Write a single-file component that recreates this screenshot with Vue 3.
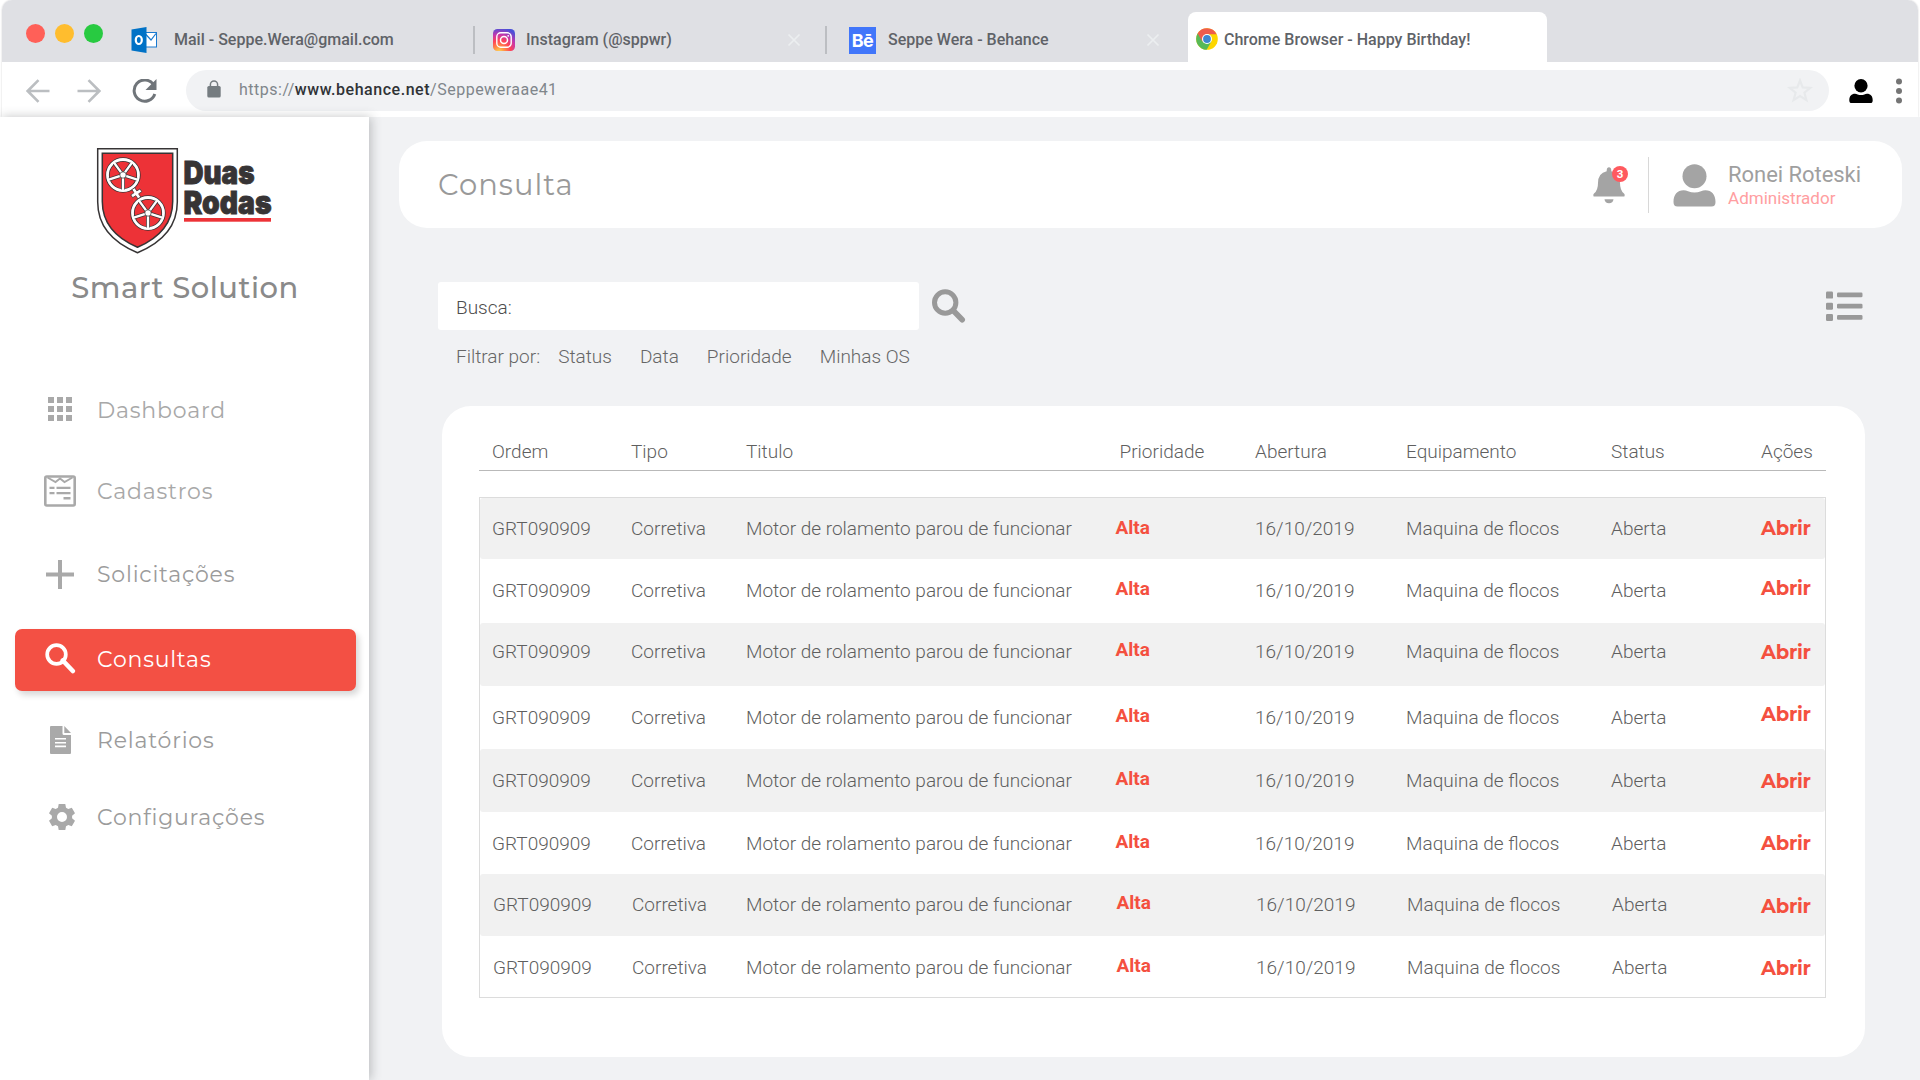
<script setup>
const tabs = [
  { icon: 'outlook', title: 'Mail - Seppe.Wera@gmail.com' },
  { icon: 'instagram', title: 'Instagram (@sppwr)', close: true },
  { icon: 'behance', title: 'Seppe Wera - Behance', close: true },
  { icon: 'chrome', title: 'Chrome Browser - Happy Birthday!', active: true },
]

const menu = [
  { id: 'dashboard', label: 'Dashboard' },
  { id: 'cadastros', label: 'Cadastros' },
  { id: 'solicitacoes', label: 'Solicitações' },
  { id: 'consultas', label: 'Consultas', active: true },
  { id: 'relatorios', label: 'Relatórios' },
  { id: 'configuracoes', label: 'Configurações' },
]

const filters = ['Status', 'Data', 'Prioridade', 'Minhas OS']
const columns = ['Ordem', 'Tipo', 'Titulo', 'Prioridade', 'Abertura', 'Equipamento', 'Status', 'Ações']

// Height of each row and top spacing of its text, priority and action cells
const rows = [
  [61, 20, 19, 19],
  [64, 21, 19, 18],
  [63, 18, 16, 18],
  [63, 21, 19, 17],
  [63, 21, 19, 21],
  [62, 21, 19, 20],
  [62, 20, 18, 21],
  [61, 21, 19, 21],
].map(([height, text, priority, action]) => ({
  ordem: 'GRT090909',
  tipo: 'Corretiva',
  titulo: 'Motor de rolamento parou de funcionar',
  prioridade: 'Alta',
  abertura: '16/10/2019',
  equipamento: 'Maquina de flocos',
  status: 'Aberta',
  style: {
    height: `${height}px`,
    '--text': `${text}px`,
    '--priority': `${priority}px`,
    '--action': `${action}px`,
  },
}))

const spokes = [18, 90, 162, 234, 306]
</script>

<template>
  <div class="window">
    <header class="browser">
      <div class="tabbar">
        <div class="lights"><i class="red"></i><i class="yellow"></i><i class="green"></i></div>
        <div v-for="tab in tabs" :key="tab.icon" class="tab" :class="[tab.icon, { active: tab.active }]">
          <svg v-if="tab.icon === 'outlook'" class="fav" width="26" height="26" viewBox="0 0 26 26">
            <rect x="13" y="5.5" width="12.5" height="14.5" fill="#fff" stroke="#1a7ad0" stroke-width="1" />
            <path d="M14 6.5l6 6.5 5-6.5" fill="none" stroke="#1a7ad0" stroke-width="1.2" />
            <path d="M0.5 2.5L15.5 0v26L0.5 23.5z" fill="#0072c6" />
            <ellipse cx="7.8" cy="13" rx="3" ry="4" fill="none" stroke="#fff" stroke-width="2.2" />
          </svg>
          <svg v-else-if="tab.icon === 'instagram'" class="fav" width="22" height="22" viewBox="0 0 22 22">
            <defs>
              <radialGradient id="ig" cx=".28" cy="1.05" r="1.1">
                <stop offset="0" stop-color="#ffdc55" />
                <stop offset=".2" stop-color="#ff9a45" />
                <stop offset=".48" stop-color="#ff4355" />
                <stop offset=".72" stop-color="#c837ab" />
                <stop offset="1" stop-color="#4a50d8" />
              </radialGradient>
            </defs>
            <rect width="22" height="22" rx="4.5" fill="url(#ig)" />
            <rect x="3.8" y="3.8" width="14.4" height="14.4" rx="4" fill="none" stroke="#fff" stroke-width="1.4" />
            <circle cx="11" cy="11" r="3.5" fill="none" stroke="#fff" stroke-width="1.5" />
            <circle cx="15.2" cy="6.8" r=".9" fill="#fff" />
          </svg>
          <span v-else-if="tab.icon === 'behance'" class="fav be">Bē</span>
          <svg v-else class="fav" width="22" height="22" viewBox="0 0 22 22">
            <circle cx="11" cy="11" r="10.8" fill="#fdd600" />
            <path d="M11 11L1.6 5.6A10.8 10.8 0 0 0 10.6 21.8L15.4 13.4z" fill="#58b957" />
            <path d="M11 11L6.3 13.4 1.6 5.6A10.8 10.8 0 0 1 20.6 6.2H11z" fill="#ef5c4c" />
            <circle cx="11" cy="11" r="5" fill="#fff" />
            <circle cx="11" cy="11" r="3.9" fill="#3f87d0" />
          </svg>
          <span class="title">{{ tab.title }}</span>
          <svg v-if="tab.close" class="close" width="14" height="14" viewBox="0 0 14 14">
            <path d="M1.5 1.5l11 11M12.5 1.5l-11 11" stroke="#eceef0" stroke-width="1.7" />
          </svg>
        </div>
      </div>
      <div class="toolbar">
        <svg class="arrow" width="24" height="24" viewBox="0 0 24 24"><path d="M23.5 12H2.5M12.5 1.2L1.7 12l10.8 10.8" /></svg>
        <svg class="arrow fwd" width="24" height="24" viewBox="0 0 24 24"><path d="M0.5 12h21M11.5 1.2L22.3 12 11.5 22.8" /></svg>
        <svg class="reload" width="25" height="24" viewBox="0 0 25 24">
          <path d="M21.2 5.2A10.6 10.6 0 1 0 22.8 15" fill="none" stroke="#70757a" stroke-width="3" />
          <path d="M24.5 0v11h-11z" fill="#70757a" />
        </svg>
        <div class="address">
          <svg class="lock" width="14" height="18" viewBox="0 0 14 18">
            <rect x="0.3" y="6" width="13.4" height="11.5" rx="1.6" fill="#757c80" />
            <path d="M3.4 7V4.6a3.6 3.6 0 0 1 7.2 0V7" fill="none" stroke="#757c80" stroke-width="1.5" />
          </svg>
          <p class="url">https://<b>www.behance.net</b>/Seppeweraae41</p>
          <svg class="star" width="26" height="25" viewBox="0 0 26 25">
            <path d="M13 2.5l2.7 6.9 7.6.5-5.9 4.8 2 7.4L13 18l-6.4 4.1 2-7.4L2.7 9.9l7.6-.5z" />
          </svg>
        </div>
        <svg class="me" width="24" height="25" viewBox="0 0 24 25">
          <ellipse cx="12" cy="6.8" rx="6.6" ry="6.8" />
          <path d="M0.3 21.5C0.3 17 2.5 14.8 6 14.8q1.5 0 2.6.6 3.4 1.3 6.8 0 1.1-.6 2.6-.6c3.5 0 5.7 2.2 5.7 6.7 0 1.7-.8 2.6-2.4 2.6H2.7C1.1 24.1 .3 23.2.3 21.5z" />
        </svg>
        <svg class="dots" width="6" height="26" viewBox="0 0 6 26">
          <circle cx="3" cy="3.5" r="3" /><circle cx="3" cy="13" r="3" /><circle cx="3" cy="22.5" r="3" />
        </svg>
      </div>
    </header>

    <div class="app">
      <aside class="sidebar">
        <svg class="logo" width="182" height="107" viewBox="0 0 182 107">
          <path d="M.7.7h79.6V54C80.3 80 64 95 40.5 104.7 17 95 .7 80 .7 54z" fill="#fff" stroke="#373435" stroke-width="1.5" />
          <path d="M5.3 5.3h70.4V53.5C75.7 76 62 90 40.5 99.3 19 90 5.3 76 5.3 53.5z" fill="#ed3237" stroke="#373435" stroke-width="1.5" />
          <g v-for="(c, i) in [[26, 27], [51, 65]]" :key="i" :transform="`translate(${c[0]} ${c[1]})`">
            <circle r="15.5" fill="none" stroke="#373435" stroke-width="4.4" />
            <circle r="15.5" fill="none" stroke="#fff" stroke-width="2.8" />
            <g v-for="a in spokes" :key="a" :transform="`rotate(${a})`">
              <rect x="2" y="-1.9" width="12.5" height="3.8" fill="#373435" />
              <rect x="2" y="-1.2" width="13" height="2.4" fill="#fff" />
            </g>
            <circle r="3.2" fill="#fff" stroke="#373435" stroke-width=".7" />
          </g>
          <g transform="translate(39.3 45.3) rotate(57)">
            <path d="M-5.5-1.7h3.8v-3.8h3.4v3.8h3.8v3.4h-3.8v3.8h-3.4v-3.8h-3.8z" fill="#fff" stroke="#373435" stroke-width=".7" />
          </g>
          <text x="86.5" y="36" textLength="71" lengthAdjust="spacingAndGlyphs">Duas</text>
          <text x="86.5" y="66" textLength="88" lengthAdjust="spacingAndGlyphs">Rodas</text>
          <rect x="87" y="70" width="87" height="3.7" fill="#ed3237" />
        </svg>
        <h1 class="product">Smart Solution</h1>
        <nav class="menu">
          <a v-for="item in menu" :key="item.id" class="item" :class="[item.id, { active: item.active }]">
            <span class="ico">
              <svg v-if="item.id === 'dashboard'" width="24" height="24" viewBox="0 0 24 24">
                <path d="M0 0h6v6H0zM9 0h6v6H9zM18 0h6v6h-6zM0 9h6v6H0zM9 9h6v6H9zM18 9h6v6h-6zM0 18h6v6H0zM9 18h6v6H9zM18 18h6v6h-6z" />
              </svg>
              <svg v-else-if="item.id === 'cadastros'" width="32" height="32" viewBox="0 0 32 32">
                <g fill="none" stroke="currentColor">
                  <rect x="1.3" y="1.5" width="29.4" height="29" rx="1.5" stroke-width="2.6" />
                  <path d="M3.5 2.5l8 4.6L16 3.5l4.5 3.6 8-4.6" stroke-width="1.9" />
                </g>
                <path d="M5.5 11.7h5V14h-5zM12.5 11.7h14V14h-14zM5.5 17h5v2.3h-5zM12.5 17h14v2.3h-14zM19.5 22h7v2.5h-7z" />
              </svg>
              <svg v-else-if="item.id === 'solicitacoes'" width="28" height="29" viewBox="0 0 28 29">
                <path d="M12 0h4v12.5h12v4H16V29h-4V16.5H0v-4h12z" />
              </svg>
              <svg v-else-if="item.id === 'consultas'" width="31" height="31" viewBox="0 0 31 31">
                <g fill="none" stroke="currentColor">
                  <circle cx="11.5" cy="11.5" r="9.3" stroke-width="3.7" />
                  <path d="M17.8 17.5l10 10.5" stroke-width="4.6" stroke-linecap="round" />
                </g>
              </svg>
              <svg v-else-if="item.id === 'relatorios'" width="21" height="28" viewBox="0 0 21 28">
                <path fill-rule="evenodd" d="M1 0h11.5v7.5q0 1.5 1.5 1.5H21v18q0 1-1 1H1q-1 0-1-1V1Q0 0 1 0zM5 12v1.6h11V12zM5 15.9v1.6h11v-1.6zM5 19.6v1.6h11v-1.6z" />
                <path d="M14.3 0L21 7h-6.7z" />
              </svg>
              <svg v-else width="26" height="26" viewBox="0 0 26 26">
                <path fill-rule="evenodd" d="M9.7 0h6.6l.7 3.7 2.3 1.3 3.5-1.3L26 9.3l-2.9 2.4v2.6L26 16.7l-3.2 5.6-3.5-1.3-2.3 1.3-.7 3.7H9.7L9 22.3 6.7 21l-3.5 1.3L0 16.7l2.9-2.4v-2.6L0 9.3l3.2-5.6L6.7 5 9 3.7zM13 8a5 5 0 1 0 0 10 5 5 0 0 0 0-10z" />
              </svg>
            </span>
            <span class="label">{{ item.label }}</span>
          </a>
        </nav>
      </aside>

      <main class="main">
        <section class="topcard">
          <h2>Consulta</h2>
          <div class="bell">
            <svg width="32" height="37" viewBox="0 0 32 37">
              <path d="M16 .3q2.1 0 2.3 2.9v1Q27 6 27 16q0 7.5 4 10.5 1 1 .6 2.4-.2.6-1 .6H1.4q-.8 0-1-.6Q0 27.5 1 26.5 5 23.5 5 16 5 6 13.7 4.2v-1Q13.9.3 16 .3z" />
              <path d="M11.5 32.3h9q-.5 4-4.5 4t-4.500-4z" />
            </svg>
            <span class="badge">3</span>
          </div>
          <div class="user">
            <svg width="43" height="43" viewBox="0 0 43 43">
              <circle cx="21.5" cy="12.3" r="12" />
              <path d="M.5 38C.5 30.5 4.5 26.3 10.5 26.3q2.5 0 4.5 1 6.5 2.4 13 0 2-1 4.5-1c6 0 10 4.2 10 11.7q0 4.5-4 4.5h-34q-4 0-4-4.500z" />
            </svg>
            <div class="who">
              <strong>Ronei Roteski</strong>
              <span>Administrador</span>
            </div>
          </div>
        </section>

        <section class="search">
          <div class="field">Busca:</div>
          <svg class="lens" width="34" height="34" viewBox="0 0 34 34">
            <circle cx="13.2" cy="13.5" r="10.7" stroke-width="5" />
            <path d="M21.700 22l8.500 8.800" stroke-width="5.600" stroke-linecap="round" />
          </svg>
          <svg class="list" width="37" height="31" viewBox="0 0 37 31">
            <rect v-for="y in [0.6, 11.8, 23]" :key="y" x="0" :y="y" width="7" height="7" rx="1.2" />
            <rect v-for="y in [1.6, 12.8, 24.1]" :key="y" x="11" :y="y" width="25.5" height="4.7" rx="1.3" />
          </svg>
        </section>
        <div class="filters">
          <span>Filtrar por:</span>
          <a v-for="f in filters" :key="f">{{ f }}</a>
        </div>

        <section class="card">
          <div class="thead">
            <span v-for="c in columns" :key="c">{{ c }}</span>
          </div>
          <div class="tbody">
            <div v-for="(r, i) in rows" :key="i" class="row" :style="r.style">
              <span>{{ r.ordem }}</span>
              <span>{{ r.tipo }}</span>
              <span>{{ r.titulo }}</span>
              <span class="priority">{{ r.prioridade }}</span>
              <span>{{ r.abertura }}</span>
              <span>{{ r.equipamento }}</span>
              <span>{{ r.status }}</span>
              <a class="action">Abrir</a>
            </div>
          </div>
        </section>
      </main>
    </div>
  </div>
</template>

<style>
body { margin: 0; background: #fff; overflow: hidden; }
</style>

<style scoped>
* { box-sizing: border-box; }
svg { display: block; flex: none; }
.window { width: 1920px; height: 1080px; display: flex; flex-direction: column; font-family: Roboto, "Liberation Sans", sans-serif; white-space: nowrap; }

/* Browser chrome */
.browser { height: 117px; margin: 0 2px; background: #fff; flex: none; box-shadow: 0 0 2px rgba(0, 0, 0, .2); border-radius: 10px 10px 0 0; }
.tabbar { height: 62px; background: #dfe0e4; border-radius: 10px 10px 0 0; display: flex; align-items: flex-start; }
.lights { display: flex; gap: 10px; width: 129px; padding-left: 24px; margin-top: 24px; flex: none; }
.lights i { width: 19px; height: 19px; border-radius: 50%; }
.red { background: #ff6058; }
.yellow { background: #ffbd2e; }
.green { background: #28ca41; }
.tab { display: flex; align-items: center; height: 28px; margin-top: 26px; font-size: 16px; font-weight: 500; color: #5f6368; flex: none; }
.title { margin-bottom: 2px; }
.fav { flex: none; }
.outlook { width: 342px; }
.outlook .title { margin-left: 17px; }
.instagram { width: 352px; border-left: 2px solid #bcbec2; padding: 0 24px 0 18px; }
.instagram .title { margin-left: 11px; }
.behance { width: 344px; border-left: 2px solid #bcbec2; padding: 0 9px 0 22px; }
.behance .title { margin-left: 12px; }
.close { margin-left: auto; }
.be { width: 27px; height: 27px; background: #4176fa; color: #fff; font: 700 18px/27px Inter, "Liberation Sans", sans-serif; letter-spacing: -.5px; text-align: center; }
.chrome { width: 359px; height: 50px; margin: 12px 0 0 19px; padding: 4px 0 0 8px; background: #fff; border-radius: 8px 8px 0 0; }
.chrome .title { margin: 0 0 0 6px; }
.toolbar { height: 55px; display: flex; align-items: center; padding: 3px 16px 0 24px; }
.toolbar .arrow { fill: none; stroke: #bbbec1; stroke-width: 2.6; }
.fwd { margin-left: 27px; }
.reload { margin-left: 31px; }
.address { margin-left: 29px; width: 1643px; height: 41px; margin-top: -1px; border-radius: 21px; background: #f1f2f4; display: flex; align-items: center; padding: 0 16px 0 20px; }
.lock { margin: -4px 0 0 1px; }
.url { margin: -3px 0 0 18px; font-size: 16px; letter-spacing: .5px; color: #80868b; }
.url b { font-weight: 500; color: #303336; letter-spacing: .53px; }
.star { margin-left: auto; fill: none; stroke: #e7e9eb; stroke-width: 2.2; }
.me { margin-left: 20px; }
.dots { margin-left: auto; fill: #757575; }

/* Sidebar */
.app { flex: 1; display: flex; min-height: 0; background: #f1f2f4; }
.sidebar { width: 369px; background: #fff; box-shadow: 2px 0 10px rgba(60, 64, 67, .3); flex: none; }
.logo { margin: 31px 0 0 97px; overflow: visible; }
.logo text { font: 900 32px Inter, sans-serif; fill: #373435; stroke: #373435; stroke-width: .9; }
.product { margin: 15px 0 0 1px; text-align: center; font: 500 29px/36px Montserrat, Inter, sans-serif; letter-spacing: .5px; color: #8a8a8a; }
.menu { padding: 72px 13px 0 15px; display: flex; flex-direction: column; }
.item { height: 62px; padding-left: 23px; display: flex; align-items: center; border-radius: 7px; font: 400 22px/30px Montserrat, Inter, sans-serif; letter-spacing: .8px; color: #a8a8a8; }
.item svg { fill: currentColor; }
.label { padding-top: 2px; }
.ico { width: 44px; margin-right: 15px; display: flex; justify-content: center; color: #a9a9a9; }
.dashboard .label { padding-top: 4px; }
.cadastros { margin-top: 20px; }
.solicitacoes { margin-top: 21px; color: #9b9b9b; }
.consultas { margin-top: 24px; }
.consultas svg { margin-bottom: 3px; }
.consultas .label { padding-top: 0; }
.relatorios { margin-top: 18px; color: #9b9b9b; }
.configuracoes { margin-top: 15px; color: #9b9b9b; }
.configuracoes svg { margin-left: 4px; }
.active.item { background: #f35044; color: #fff; box-shadow: 3px 4px 6px rgba(0, 0, 0, .16); }
.active .ico { color: #fff; }

/* Page header */
.main { flex: 1; padding: 24px 18px 0 30px; }
.topcard { height: 87px; border-radius: 28px; background: #fff; display: flex; align-items: center; padding: 0 41px 0 39px; }
h2 { margin: 1px auto 0 0; font: 400 29px/36px Montserrat, Inter, sans-serif; letter-spacing: 1.05px; color: #999; }
.bell { position: relative; width: 32px; margin-right: 23px; padding-top: 1px; }
.bell svg, .user svg { fill: #a4a4a4; }
.badge { position: absolute; top: 0; right: -3px; width: 16px; height: 16px; border-radius: 50%; background: #ff5a5f; color: #fff; font-size: 11.5px; font-weight: 700; line-height: 17px; text-align: center; }
.user { height: 56px; border-left: 1px solid #d8d8d8; padding-left: 24px; display: flex; align-items: center; }
.user svg { margin-top: 1px; }
.who { display: flex; flex-direction: column; margin-left: 12px; }
.who strong { font-weight: 400; font-size: 22px; line-height: 26px; color: #9f9f9f; letter-spacing: -.05px; }
.who span { font-size: 17px; line-height: 20px; color: #ff9ea1; }

/* Search */
.search { margin: 54px 39px 0 39px; height: 48px; display: flex; align-items: center; }
.field { width: 481px; height: 48px; border-radius: 3px; background: #fff; padding-left: 18px; font-size: 19px; font-weight: 300; line-height: 52px; color: #4d4d4d; }
.lens { margin-left: 13px; fill: none; stroke: #999; }
.list { margin-left: auto; fill: #999; }
.filters { margin: 15px 0 0 57px; height: 24px; display: flex; font-size: 19px; font-weight: 300; line-height: 24px; color: #666; }
.filters a { margin-left: 28px; }
.filters span + a { margin-left: 18px; }

/* Orders table */
.card { margin: 37px 37px 0 43px; height: 651px; border-radius: 29px; background: #fff; padding: 32px 39px 0 37px; font-size: 19px; font-weight: 300; line-height: 22px; color: #5f5f5f; }
.thead, .row { display: grid; grid-template-columns: 139px 115px 369.5px 139.5px 151px 205px 150px 1fr; padding-left: 12px; }
.thead { height: 33px; padding: 3px 0 0 13px; border-bottom: 1px solid #b9b9b9; }
.thead span:nth-child(4) { margin-left: 4px; }
.tbody { margin-top: 26px; border: 1px solid #dcdcdc; }
.row:nth-child(odd) { background: #f1f1f1; border-radius: 3px; }
.row span { margin-top: var(--text); }
.row:nth-child(n + 7) span:not(:nth-child(3)) { padding-left: 1px; }
.row .priority { margin-top: var(--priority); font-weight: 700; color: #f4503f; }
.row .action { margin-top: var(--action); font: 700 19.5px/22px Montserrat, Inter, sans-serif; letter-spacing: -.25px; color: #f4503f; }
</style>
